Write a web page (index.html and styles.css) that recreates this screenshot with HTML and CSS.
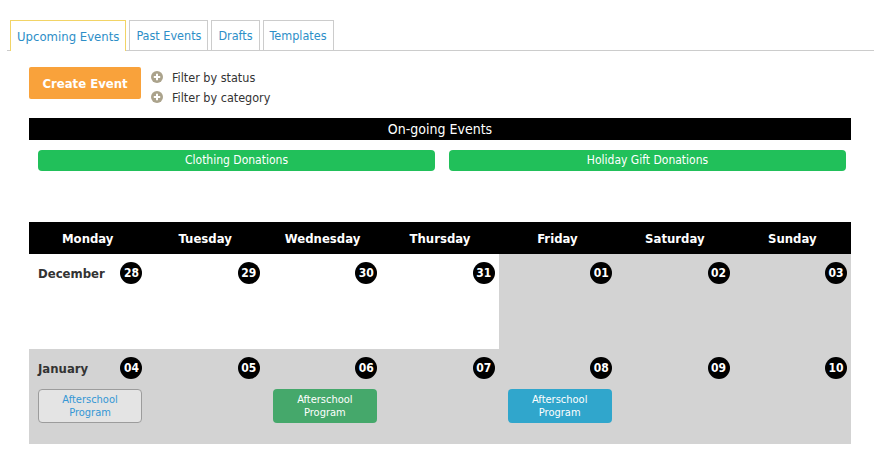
FILE: index.html
```html
<!DOCTYPE html>
<html>
<head>
<meta charset="utf-8">
<link rel="stylesheet" href="styles.css">
</head>
<body>
<nav class="tabs">
  <a class="tab active">Upcoming Events</a>
  <a class="tab">Past Events</a>
  <a class="tab">Drafts</a>
  <a class="tab">Templates</a>
</nav>

<div class="toolbar">
  <button class="create">Create Event</button>
  <div class="filters">
    <div class="filter"><span class="plus"><svg width="12" height="12" viewBox="0 0 12 12"><circle cx="6" cy="6" r="6" fill="#aba38c"/><path d="M6 2.8v6.4M2.8 6h6.4" stroke="#fff" stroke-width="2"/></svg></span>Filter by status</div>
    <div class="filter"><span class="plus"><svg width="12" height="12" viewBox="0 0 12 12"><circle cx="6" cy="6" r="6" fill="#aba38c"/><path d="M6 2.8v6.4M2.8 6h6.4" stroke="#fff" stroke-width="2"/></svg></span>Filter by category</div>
  </div>
</div>

<section class="ongoing">
  <div class="ongoing-title">On-going Events</div>
  <div class="ongoing-list">
    <div class="ongoing-item">Clothing Donations</div>
    <div class="ongoing-item">Holiday Gift Donations</div>
  </div>
</section>

<section class="calendar">
  <div class="dow">Monday</div>
  <div class="dow">Tuesday</div>
  <div class="dow">Wednesday</div>
  <div class="dow">Thursday</div>
  <div class="dow">Friday</div>
  <div class="dow">Saturday</div>
  <div class="dow">Sunday</div>

  <div class="cell"><div class="cell-top"><span class="month">December</span><span class="num">28</span></div></div>
  <div class="cell"><div class="cell-top"><span class="num">29</span></div></div>
  <div class="cell"><div class="cell-top"><span class="num">30</span></div></div>
  <div class="cell"><div class="cell-top"><span class="num">31</span></div></div>
  <div class="cell grey"><div class="cell-top"><span class="num">01</span></div></div>
  <div class="cell grey"><div class="cell-top"><span class="num">02</span></div></div>
  <div class="cell grey"><div class="cell-top"><span class="num">03</span></div></div>

  <div class="cell grey"><div class="cell-top"><span class="month">January</span><span class="num">04</span></div><div class="event ev-draft">Afterschool<br>Program</div></div>
  <div class="cell grey"><div class="cell-top"><span class="num">05</span></div></div>
  <div class="cell grey"><div class="cell-top"><span class="num">06</span></div><div class="event ev-green">Afterschool<br>Program</div></div>
  <div class="cell grey"><div class="cell-top"><span class="num">07</span></div></div>
  <div class="cell grey"><div class="cell-top"><span class="num">08</span></div><div class="event ev-blue">Afterschool<br>Program</div></div>
  <div class="cell grey"><div class="cell-top"><span class="num">09</span></div></div>
  <div class="cell grey"><div class="cell-top"><span class="num">10</span></div></div>
</section>
</body>
</html>
```
FILE: styles.css
```css
* { box-sizing: border-box; }
body {
  margin: 0;
  font-family: "DejaVu Sans Condensed", "DejaVu Sans", sans-serif;
  font-size: 12px;
  color: #333;
  background: #fff;
}
.tabs {
  display: flex;
  gap: 3px;
  margin: 20px 0 0 7px;
  padding-left: 3px;
  border-bottom: 1px solid #ccc;
  height: 31px;
}
.tab {
  display: flex;
  align-items: center;
  height: 30px;
  padding: 0 6px;
  border: 1px solid #ccc;
  border-bottom: none;
  color: #2d8ec7;
  font-size: 12.5px;
  background: #fff;
}
.tab.active {
  border-color: #f2d466;
  height: 31px;
  font-size: 13px;
}
.toolbar {
  display: flex;
  align-items: flex-start;
  gap: 10px;
  margin: 16px 0 0 29px;
}
.create {
  width: 112px;
  height: 32px;
  border: none;
  border-radius: 2px;
  background: #f9a23b;
  color: #fff;
  font-family: inherit;
  font-weight: bold;
  font-size: 13px;
  padding: 0;
}
.filters {
  display: flex;
  flex-direction: column;
  gap: 2px;
  padding-top: 1px;
}
.filter {
  display: flex;
  align-items: center;
  gap: 9px;
  height: 18px;
  font-size: 12.5px;
  color: #333;
}
.plus { display: flex; }
.ongoing {
  margin: 12px 23px 0 29px;
}
.ongoing-title {
  background: #000;
  color: #fff;
  height: 22px;
  line-height: 22px;
  text-align: center;
  font-size: 14px;
}
.ongoing-list {
  display: flex;
  gap: 14px;
  padding: 10px 5px 0 9px;
}
.ongoing-item {
  flex: 1;
  height: 21px;
  line-height: 21px;
  background: #21c05a;
  color: #fff;
  border-radius: 4px;
  text-align: center;
  font-size: 12px;
}
.calendar {
  display: grid;
  grid-template-columns: repeat(7, 1fr);
  grid-template-rows: 32px 95px 95px;
  margin: 51px 23px 0 29px;
}
.dow {
  background: #000;
  color: #fff;
  font-weight: bold;
  font-size: 13px;
  display: flex;
  align-items: center;
  justify-content: center;
}
.cell {
  padding: 8px 4px 0 9px;
  background: #fff;
}
.cell.grey { background: #d3d3d3; }
.cell-top {
  display: flex;
  align-items: center;
  height: 22px;
}
.month {
  font-weight: bold;
  font-size: 13px;
  color: #333;
}
.num {
  margin-left: auto;
  width: 22px;
  height: 22px;
  border-radius: 50%;
  background: #000;
  color: #fff;
  font-weight: bold;
  font-size: 12px;
  display: flex;
  align-items: center;
  justify-content: center;
}
.event {
  margin-top: 10px;
  width: 104px;
  height: 34px;
  border-radius: 4px;
  display: flex;
  align-items: center;
  justify-content: center;
  text-align: center;
  line-height: 13px;
  font-size: 11px;
  color: #fff;
}
.ev-draft {
  background: #e4e4e4;
  border: 1px solid #9c9c9c;
  color: #3497d5;
}
.ev-green { background: #45a86b; }
.ev-blue { background: #30a6cc; }
```
